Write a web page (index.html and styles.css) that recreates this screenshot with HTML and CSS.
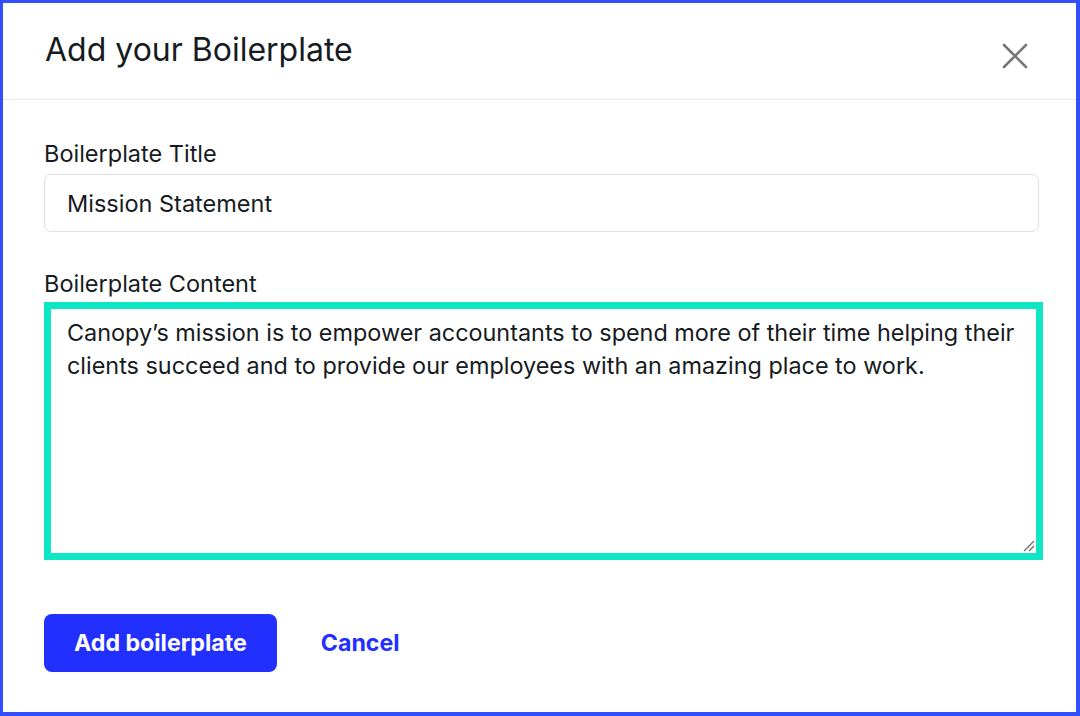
FILE: index.html
```html
<!DOCTYPE html>
<html>
<head>
<meta charset="utf-8">
<link rel="stylesheet" href="styles.css">
</head>
<body>
<div class="frame">
  <div class="header">
    <h1 class="title">Add your Boilerplate</h1>
    <button class="close" aria-label="Close">
      <svg width="26" height="26" viewBox="0 0 26 26"><path d="M2 2 L24 24 M24 2 L2 24" stroke="#767676" stroke-width="2.6" stroke-linecap="round" fill="none"/></svg>
    </button>
  </div>
  <div class="body">
    <label class="label">Boilerplate Title</label>
    <div class="input">Mission Statement</div>
    <label class="label label-content">Boilerplate Content</label>
    <div class="textarea">
      <div class="ta-text">Canopy’s mission is to empower accountants to spend more of their time helping their clients succeed and to provide our employees with an amazing place to work.</div>
      <svg class="grip" width="14" height="14" viewBox="0 0 14 14"><path d="M13 3 L3 13 M13 8 L8 13" stroke="#6a6a6a" stroke-width="1.3" fill="none"/></svg>
    </div>
    <div class="actions">
      <button class="primary">Add boilerplate</button>
      <button class="cancel">Cancel</button>
    </div>
  </div>
</div>
</body>
</html>
```
FILE: styles.css
```css
html, body { margin: 0; padding: 0; background: #fff; }
body { font-family: Inter, "Noto Sans", sans-serif; color: #161b22; }
.frame {
  box-sizing: border-box;
  width: 1080px; height: 716px;
  border-style: solid; border-color: #3050ff;
  border-width: 3px 4px 4px 3px;
  display: flex; flex-direction: column;
}
.header {
  height: 97px; box-sizing: border-box;
  border-bottom: 1px solid #e6e6e6;
  display: flex; align-items: center; justify-content: space-between;
  padding: 0 48px 0 42px;
}
.title { margin: 0 0 2px 0; font-size: 32px; line-height: 40px; font-weight: 400; color: #161b22; }
.close { border: 0; background: none; padding: 0; margin-top: 10px; display: flex; }
.body { padding: 39px 37px 0 41px; display: flex; flex-direction: column; }
.label { font-size: 23.5px; line-height: 30px; color: #161b22; }
.input {
  margin-top: 5px; height: 58px; box-sizing: border-box;
  border: 1px solid #e0e0e0; border-radius: 7px;
  padding: 0 22px; display: flex; align-items: center;
  font-size: 23.5px; color: #161b22;
}
.label-content { margin-top: 37px; }
.textarea {
  position: relative;
  margin-top: 3px; margin-right: -4px; height: 258px; box-sizing: border-box;
  border: 7px solid #0fe6c6;
  padding: 7px 16px;
}
.ta-text { font-size: 23.4px; line-height: 33px; color: #161b22; }
.grip { position: absolute; right: 1px; bottom: 1px; }
.actions { margin-top: 54px; display: flex; align-items: center; gap: 44px; }
.primary {
  height: 58px; padding: 0 30px; border: 0; border-radius: 8px;
  background: #2230ff; color: #fff;
  font-family: Inter, sans-serif; font-size: 23.2px; font-weight: 700;
}
.cancel {
  border: 0; background: none; padding: 0;
  color: #2230ff; font-family: Inter, sans-serif; font-size: 23.2px; font-weight: 700;
}
```
